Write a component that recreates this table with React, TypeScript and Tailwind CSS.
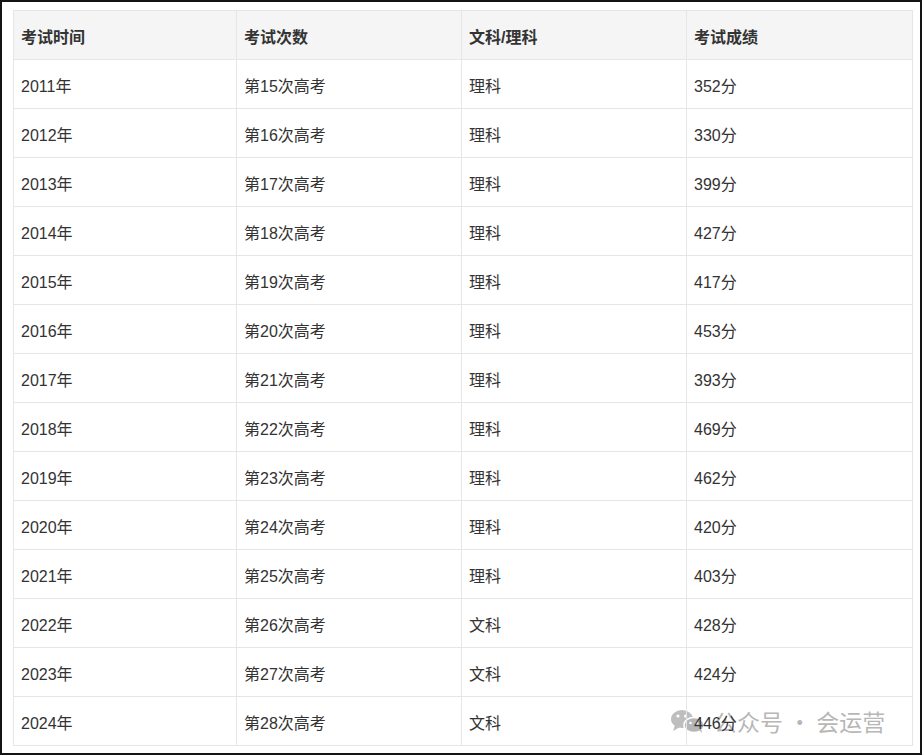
const rows: [string, string, string, string][] = [
  ['2011年', '第15次高考', '理科', '352分'],
  ['2012年', '第16次高考', '理科', '330分'],
  ['2013年', '第17次高考', '理科', '399分'],
  ['2014年', '第18次高考', '理科', '427分'],
  ['2015年', '第19次高考', '理科', '417分'],
  ['2016年', '第20次高考', '理科', '453分'],
  ['2017年', '第21次高考', '理科', '393分'],
  ['2018年', '第22次高考', '理科', '469分'],
  ['2019年', '第23次高考', '理科', '462分'],
  ['2020年', '第24次高考', '理科', '420分'],
  ['2021年', '第25次高考', '理科', '403分'],
  ['2022年', '第26次高考', '文科', '428分'],
  ['2023年', '第27次高考', '文科', '424分'],
  ['2024年', '第28次高考', '文科', '446分'],
];

const headers = ['考试时间', '考试次数', '文科/理科', '考试成绩'];

function WeChatIcon() {
  return (
    <svg width="36" height="24" viewBox="0 0 36 24">
      <ellipse cx="12" cy="10" rx="11" ry="9" fill="#a9a9a9" />
      <path d="M5 16 L3 22 L10 18 Z" fill="#a9a9a9" />
      <circle cx="8" cy="7" r="1.6" fill="#fff" />
      <circle cx="15.5" cy="7" r="1.6" fill="#fff" />
      <ellipse cx="24" cy="16" rx="10" ry="7.5" fill="#9e9e9e" stroke="#fff" strokeWidth="1.5" />
      <path d="M29 21 L32 24 L31 19 Z" fill="#9e9e9e" />
      <circle cx="20.5" cy="14" r="1.3" fill="#fff" />
      <circle cx="27" cy="14" r="1.3" fill="#fff" />
    </svg>
  );
}

export default function App() {
  return (
    <div
      className="relative w-[922px] h-[755px] bg-white border-2 border-[#141414] pl-[11px] pt-[8px]"
      style={{ fontFamily: '"Liberation Sans", "Noto Sans CJK SC", sans-serif' }}
    >
      {/* watermark, sits under the cell text */}
      <div className="pointer-events-none absolute left-[668px] top-[702px] z-0 flex items-center gap-[8px] opacity-75">
        <WeChatIcon />
        <span className="text-[23px] text-[#a0a0a0]" style={{ fontFamily: '"Noto Sans CJK SC", sans-serif' }}>
          公众号 · 会运营
        </span>
      </div>

      <table className="relative z-10 table-fixed w-[899px] border-collapse text-[16px] text-[#333]">
        <colgroup>
          <col className="w-[223px]" />
          <col className="w-[225px]" />
          <col className="w-[225px]" />
          <col className="w-[226px]" />
        </colgroup>
        <thead>
          <tr className="bg-[#f5f5f5]">
            {headers.map((h) => (
              <th
                key={h}
                className="h-[49px] border border-[#e6e6e6] pl-[7px] pt-[5px] text-left font-bold text-[#333]"
              >
                {h}
              </th>
            ))}
          </tr>
        </thead>
        <tbody>
          {rows.map((r) => (
            <tr key={r[0]}>
              {r.map((c, i) => (
                <td
                  key={i}
                  className="h-[49px] border border-[#e6e6e6] pl-[7px] pt-[5px] text-left"
                >
                  {c}
                </td>
              ))}
            </tr>
          ))}
        </tbody>
      </table>
    </div>
  );
}
